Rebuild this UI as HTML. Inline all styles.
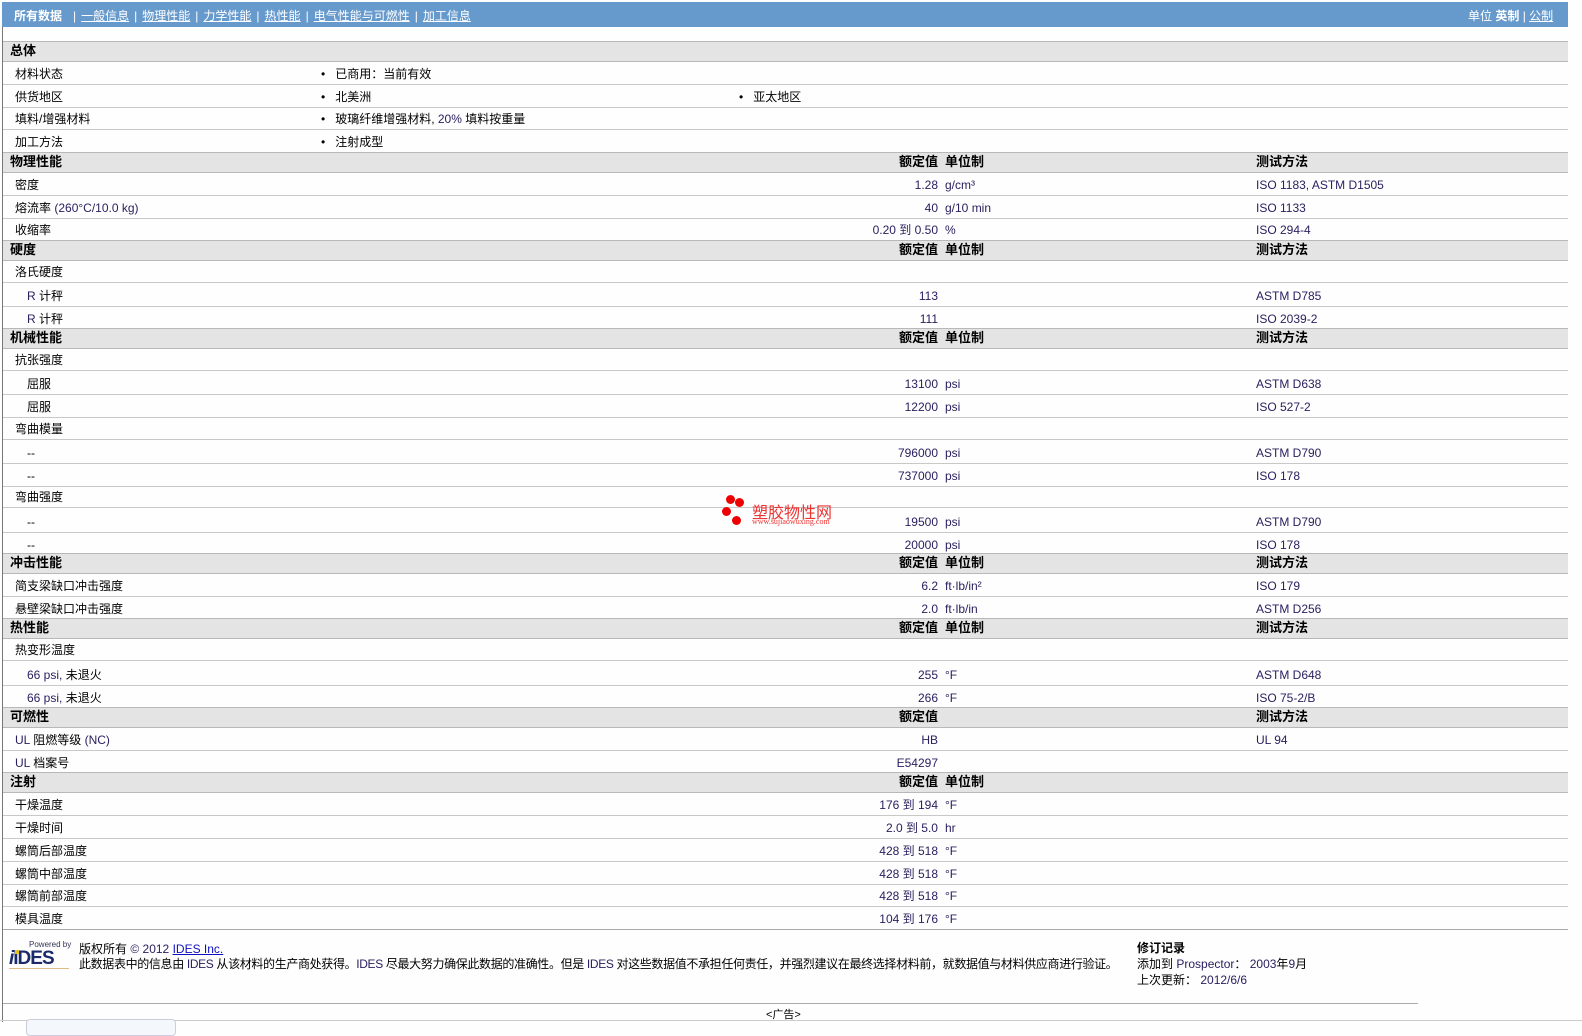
<!DOCTYPE html>
<html><head><meta charset="utf-8"><style>
body{margin:0;width:1582px;height:1034px;background:#fdfefd;position:relative;overflow:hidden;font-family:"Liberation Sans","Noto Sans CJK SC",sans-serif;font-size:12px;color:#000}
.bar{position:absolute;left:2px;top:2px;width:1566px;height:25px;background:#6699cc;color:#fff;font-size:12px}
.bar span{position:absolute;top:5px;white-space:nowrap}
.bar u{color:#fff}
.bar i{font-style:normal;margin:0 5px}
.lb{position:absolute;left:2px;top:27px;width:1px;height:995px;background:#777}
.r{position:absolute;left:3px;width:1565px;height:22px;border-bottom:1px solid #c8c8c8}
.h{position:absolute;left:3px;width:1565px;height:19px;border-top:1px solid #b8b8b8;border-bottom:1px solid #b8b8b8;background:#e4e4e4;font-weight:bold;font-size:13px}
.r>span,.h>span{position:absolute;top:5px;white-space:nowrap;line-height:14px}
.h>span{top:2px}
.l{left:12px}.s{left:24px}.v{right:630px;text-align:right}.u{left:942px}.t{left:1253px}
.b1{left:318px}.b2{left:736px}
.e{color:#2c2060}
.hv{right:630px}.hu{left:942px}
</style></head><body>
<div class="bar">
<span style="left:12px;font-weight:bold">所有数据</span>
<span style="left:66px"><i>|</i><u>一般信息</u><i>|</i><u>物理性能</u><i>|</i><u>力学性能</u><i>|</i><u>热性能</u><i>|</i><u>电气性能与可燃性</u><i>|</i><u>加工信息</u></span>
<span style="left:1466px">单位 <b>英制</b> | <u>公制</u></span>
</div>
<div class="lb"></div>

<div class="h" style="top:41px"><span class="l" style="left:7px">总体</span></div>
<div class="r" style="top:62px"><span class="l">材料状态</span><span class="b1">•&nbsp;&nbsp; 已商用：当前有效</span></div>
<div class="r" style="top:85px"><span class="l">供货地区</span><span class="b1">•&nbsp;&nbsp; 北美洲</span><span class="b2">•&nbsp;&nbsp; 亚太地区</span></div>
<div class="r" style="top:107px"><span class="l">填料/增强材料</span><span class="b1">•&nbsp;&nbsp; 玻璃纤维增强材料, <span class="e">20%</span> 填料按重量</span></div>
<div class="r" style="top:130px"><span class="l">加工方法</span><span class="b1">•&nbsp;&nbsp; 注射成型</span></div>

<div class="h" style="top:152px"><span style="left:7px">物理性能</span><span class="hv">额定值</span><span class="hu">单位制</span><span class="t">测试方法</span></div>
<div class="r" style="top:173px"><span class="l">密度</span><span class="v e">1.28</span><span class="u e">g/cm³</span><span class="t e">ISO 1183, ASTM D1505</span></div>
<div class="r" style="top:196px"><span class="l">熔流率 <span class="e">(260°C/10.0 kg)</span></span><span class="v e">40</span><span class="u e">g/10 min</span><span class="t e">ISO 1133</span></div>
<div class="r" style="top:218px"><span class="l">收缩率</span><span class="v e">0.20 到 0.50</span><span class="u e">%</span><span class="t e">ISO 294-4</span></div>

<div class="h" style="top:240px"><span style="left:7px">硬度</span><span class="hv">额定值</span><span class="hu">单位制</span><span class="t">测试方法</span></div>
<div class="r" style="top:260px"><span class="l">洛氏硬度</span></div>
<div class="r" style="top:284px"><span class="s"><span class="e">R</span> 计秤</span><span class="v e">113</span><span class="t e">ASTM D785</span></div>
<div class="r" style="top:307px"><span class="s"><span class="e">R</span> 计秤</span><span class="v e">111</span><span class="t e">ISO 2039-2</span></div>

<div class="h" style="top:328px"><span style="left:7px">机械性能</span><span class="hv">额定值</span><span class="hu">单位制</span><span class="t">测试方法</span></div>
<div class="r" style="top:348px"><span class="l">抗张强度</span></div>
<div class="r" style="top:372px"><span class="s">屈服</span><span class="v e">13100</span><span class="u e">psi</span><span class="t e">ASTM D638</span></div>
<div class="r" style="top:395px"><span class="s">屈服</span><span class="v e">12200</span><span class="u e">psi</span><span class="t e">ISO 527-2</span></div>
<div class="r" style="top:417px"><span class="l">弯曲模量</span></div>
<div class="r" style="top:441px"><span class="s">--</span><span class="v e">796000</span><span class="u e">psi</span><span class="t e">ASTM D790</span></div>
<div class="r" style="top:464px"><span class="s">--</span><span class="v e">737000</span><span class="u e">psi</span><span class="t e">ISO 178</span></div>
<div class="r" style="top:485px"><span class="l">弯曲强度</span></div>
<div class="r" style="top:510px"><span class="s">--</span><span class="v e">19500</span><span class="u e">psi</span><span class="t e">ASTM D790</span></div>
<div class="r" style="top:533px"><span class="s">--</span><span class="v e">20000</span><span class="u e">psi</span><span class="t e">ISO 178</span></div>

<div class="h" style="top:553px"><span style="left:7px">冲击性能</span><span class="hv">额定值</span><span class="hu">单位制</span><span class="t">测试方法</span></div>
<div class="r" style="top:574px"><span class="l">简支梁缺口冲击强度</span><span class="v e">6.2</span><span class="u e">ft·lb/in²</span><span class="t e">ISO 179</span></div>
<div class="r" style="top:597px"><span class="l">悬壁梁缺口冲击强度</span><span class="v e">2.0</span><span class="u e">ft·lb/in</span><span class="t e">ASTM D256</span></div>

<div class="h" style="top:618px"><span style="left:7px">热性能</span><span class="hv">额定值</span><span class="hu">单位制</span><span class="t">测试方法</span></div>
<div class="r" style="top:638px"><span class="l">热变形温度</span></div>
<div class="r" style="top:663px"><span class="s"><span class="e">66 psi,</span> 未退火</span><span class="v e">255</span><span class="u e">°F</span><span class="t e">ASTM D648</span></div>
<div class="r" style="top:686px"><span class="s"><span class="e">66 psi,</span> 未退火</span><span class="v e">266</span><span class="u e">°F</span><span class="t e">ISO 75-2/B</span></div>

<div class="h" style="top:707px"><span style="left:7px">可燃性</span><span class="hv">额定值</span><span class="t">测试方法</span></div>
<div class="r" style="top:728px"><span class="l"><span class="e">UL</span> 阻燃等级 <span class="e">(NC)</span></span><span class="v e">HB</span><span class="t e">UL 94</span></div>
<div class="r" style="top:751px"><span class="l"><span class="e">UL</span> 档案号</span><span class="v e">E54297</span></div>

<div class="h" style="top:772px"><span style="left:7px">注射</span><span class="hv">额定值</span><span class="hu">单位制</span></div>
<div class="r" style="top:793px"><span class="l">干燥温度</span><span class="v e">176 到 194</span><span class="u e">°F</span></div>
<div class="r" style="top:816px"><span class="l">干燥时间</span><span class="v e">2.0 到 5.0</span><span class="u e">hr</span></div>
<div class="r" style="top:839px"><span class="l">螺筒后部温度</span><span class="v e">428 到 518</span><span class="u e">°F</span></div>
<div class="r" style="top:862px"><span class="l">螺筒中部温度</span><span class="v e">428 到 518</span><span class="u e">°F</span></div>
<div class="r" style="top:884px"><span class="l">螺筒前部温度</span><span class="v e">428 到 518</span><span class="u e">°F</span></div>
<div class="r" style="top:907px;border-bottom:1px solid #aaa"><span class="l">模具温度</span><span class="v e">104 到 176</span><span class="u e">°F</span></div>

<!-- watermark -->
<div style="position:absolute;left:722px;top:495px;width:30px;height:32px">
<div style="position:absolute;left:4px;top:0;width:9px;height:9px;border-radius:50%;background:#e00"></div>
<div style="position:absolute;left:13px;top:3px;width:9px;height:9px;border-radius:50%;background:#e00"></div>
<div style="position:absolute;left:0;top:12px;width:9px;height:9px;border-radius:50%;background:#e00"></div>
<div style="position:absolute;left:10px;top:21px;width:9px;height:9px;border-radius:50%;background:#e00"></div>
</div>
<div style="position:absolute;left:752px;top:499px;color:#e33;font-size:16px">塑胶物性网</div>
<div style="position:absolute;left:752px;top:517px;color:#e33;font-size:8px;font-family:'Liberation Serif',serif">www.sujiaowuxing.com</div>

<!-- footer -->
<div style="position:absolute;left:7px;top:940px;width:64px;height:30px">
<div style="position:absolute;left:22px;top:0;font-size:8px;color:#335;white-space:nowrap">Powered by</div>
<div style="position:absolute;left:2px;top:8px;font-size:19px;font-weight:bold;color:#1a2a6a;letter-spacing:-1px;font-style:italic;white-space:nowrap"><span style="color:#1a2a6a">i</span><span style="font-style:normal">IDES</span></div>
<div style="position:absolute;left:8px;top:10px;width:4px;height:4px;background:#e8c020"></div>
<div style="position:absolute;left:2px;top:28px;width:60px;height:1px;background:#db8"></div>
</div>
<div style="position:absolute;left:79px;top:940px">版权所有 <span class="e">© 2012</span> <u style="color:#1010c0">IDES Inc.</u></div>
<div style="position:absolute;left:79px;top:955px;white-space:nowrap;letter-spacing:-0.35px">此数据表中的信息由 <span class="e">IDES</span> 从该材料的生产商处获得。<span class="e">IDES</span> 尽最大努力确保此数据的准确性。但是 <span class="e">IDES</span> 对这些数据值不承担任何责任，并强烈建议在最终选择材料前，就数据值与材料供应商进行验证。</div>
<div style="position:absolute;left:1137px;top:939px;font-weight:bold">修订记录</div>
<div style="position:absolute;left:1137px;top:955px">添加到 <span class="e">Prospector</span>： <span class="e">2003</span>年<span class="e">9</span>月</div>
<div style="position:absolute;left:1137px;top:971px">上次更新： <span class="e">2012/6/6</span></div>
<div style="position:absolute;left:3px;top:1003px;width:1415px;height:1px;background:#aaa"></div>
<div style="position:absolute;left:766px;top:1006px;font-size:11px">&lt;广告&gt;</div>
<div style="position:absolute;left:0;top:1020px;width:1582px;height:1px;background:#ccc"></div>
<div style="position:absolute;left:26px;top:1019px;width:148px;height:15px;border:1px solid #ccd;border-radius:4px;background:#f4f8fc"></div>
</body></html>
